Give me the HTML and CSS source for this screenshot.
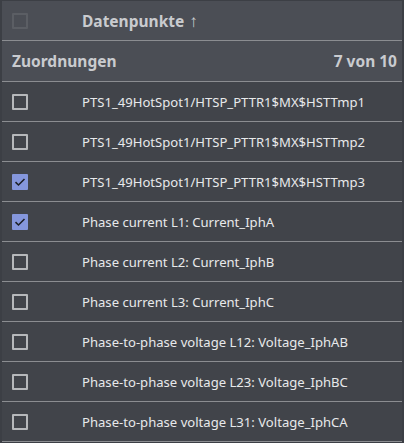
FILE: index.html
```html
<!DOCTYPE html>
<html lang="de">
<head>
<meta charset="utf-8">
<link rel="stylesheet" href="styles.css">
</head>
<body>
<div class="table">
  <div class="head">
    <span class="cb disabled"></span>
    <span class="head-title">Datenpunkte <span class="arrow">↑</span></span>
  </div>
  <div class="group">
    <span>Zuordnungen</span>
    <span>7 von 10</span>
  </div>
  <div class="row"><span class="cb"></span><span class="label">PTS1_49HotSpot1/HTSP_PTTR1$MX$HSTTmp1</span></div>
  <div class="row"><span class="cb"></span><span class="label">PTS1_49HotSpot1/HTSP_PTTR1$MX$HSTTmp2</span></div>
  <div class="row"><span class="cb checked"><svg viewBox="0 0 16 16" width="16" height="16"><path d="M3.5 8.2 L6.5 11 L12.5 5" fill="none" stroke="#1f2228" stroke-width="1.6"/></svg></span><span class="label">PTS1_49HotSpot1/HTSP_PTTR1$MX$HSTTmp3</span></div>
  <div class="row"><span class="cb checked"><svg viewBox="0 0 16 16" width="16" height="16"><path d="M3.5 8.2 L6.5 11 L12.5 5" fill="none" stroke="#1f2228" stroke-width="1.6"/></svg></span><span class="label">Phase current L1: Current_IphA</span></div>
  <div class="row"><span class="cb"></span><span class="label">Phase current L2: Current_IphB</span></div>
  <div class="row"><span class="cb"></span><span class="label">Phase current L3: Current_IphC</span></div>
  <div class="row"><span class="cb"></span><span class="label">Phase-to-phase voltage L12: Voltage_IphAB</span></div>
  <div class="row"><span class="cb"></span><span class="label">Phase-to-phase voltage L23: Voltage_IphBC</span></div>
  <div class="row"><span class="cb"></span><span class="label">Phase-to-phase voltage L31: Voltage_IphCA</span></div>
</div>
</body>
</html>
```
FILE: styles.css
```css
html, body {
  margin: 0;
  padding: 0;
  background: #3c3f45;
}
body {
  font-family: "Noto Sans", "Open Sans", sans-serif;
  width: 404px;
  height: 443px;
  overflow: hidden;
}
.table {
  margin: 1px 2px 0 2px;
  background: #41444a;
}
.head {
  height: 39px;
  display: flex;
  align-items: center;
  background: #4b4e55;
  border-bottom: 1px solid #8b8d91;
}
.head-title {
  margin-left: 54px;
  font-weight: 700;
  font-size: 15.5px;
  color: #c9cbcf;
}
.arrow {
  font-size: 17px;
  font-weight: 400;
  margin-left: 1px;
}
.group {
  height: 40px;
  display: flex;
  align-items: center;
  justify-content: space-between;
  padding: 0 5px 0 10px;
  background: #4b4e55;
  border-bottom: 1px solid #8b8d91;
  font-weight: 700;
  font-size: 15.5px;
  color: #c9cbcf;
}
.row {
  height: 39px;
  display: flex;
  align-items: center;
  border-bottom: 1px solid #8b8d91;
}
.cb {
  box-sizing: border-box;
  width: 16px;
  height: 16px;
  margin-left: 10px;
  border: 2px solid #b6b8bb;
  border-radius: 1px;
  flex: none;
  display: flex;
  align-items: center;
  justify-content: center;
}
.cb.disabled {
  border-color: #5b5e64;
}
.cb.checked {
  border: none;
  background: #8597dc;
}
.label {
  margin-left: 54px;
  font-size: 13.1px;
  color: #e8e9eb;
}
```
